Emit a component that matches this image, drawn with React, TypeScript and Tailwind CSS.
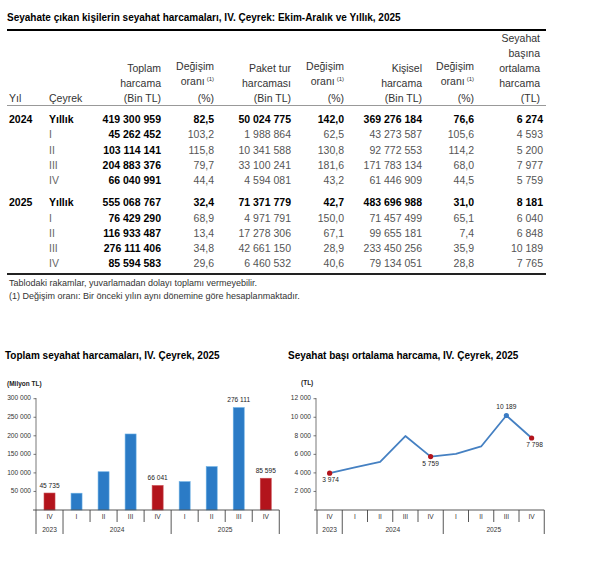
import React from "react";

type Row = {
  year?: string;
  q: string;
  vals: string[];
  bold?: boolean;
};

const rows2024: Row[] = [
  { year: "2024", q: "Yıllık", bold: true, vals: ["419 300 959", "82,5", "50 024 775", "142,0", "369 276 184", "76,6", "6 274"] },
  { q: "I", vals: ["45 262 452", "103,2", "1 988 864", "62,5", "43 273 587", "105,6", "4 593"] },
  { q: "II", vals: ["103 114 141", "115,8", "10 341 588", "130,8", "92 772 553", "114,2", "5 200"] },
  { q: "III", vals: ["204 883 376", "79,7", "33 100 241", "181,6", "171 783 134", "68,0", "7 977"] },
  { q: "IV", vals: ["66 040 991", "44,4", "4 594 081", "43,2", "61 446 909", "44,5", "5 759"] },
];

const rows2025: Row[] = [
  { year: "2025", q: "Yıllık", bold: true, vals: ["555 068 767", "32,4", "71 371 779", "42,7", "483 696 988", "31,0", "8 181"] },
  { q: "I", vals: ["76 429 290", "68,9", "4 971 791", "150,0", "71 457 499", "65,1", "6 040"] },
  { q: "II", vals: ["116 933 487", "13,4", "17 278 306", "67,1", "99 655 181", "7,4", "6 848"] },
  { q: "III", vals: ["276 111 406", "34,8", "42 661 150", "28,9", "233 450 256", "35,9", "10 189"] },
  { q: "IV", vals: ["85 594 583", "29,6", "6 460 532", "40,6", "79 134 051", "28,8", "7 765"] },
];

const gridCols = "grid grid-cols-[40px_53px_61px_53px_77px_53px_78px_52px_69px]";

const Sup = () => <span className="relative -top-[4px] ml-[2px] text-[6px]">(1)</span>;

const TableRow = ({ row }: { row: Row }) => (
  <div className={`${gridCols} h-[15.25px] items-center leading-[15px]`}>
    <div className="pl-[2px] font-bold text-black">{row.year}</div>
    <div className={row.bold ? "pl-[2px] font-bold text-black" : "pl-[2px] text-[#666]"}>{row.q}</div>
    {row.vals.map((v, i) => (
      <div
        key={i}
        className={row.bold || i === 0 ? "text-right font-bold text-black" : "text-right text-[#555]"}
      >
        {v}
      </div>
    ))}
  </div>
);

// chart helpers (page coordinates via viewBox offset)
const BASE = 509;
const H = 111.3;

const barData = [
  { q: "IV", v: 45735, red: true, label: "45 735" },
  { q: "I", v: 45262 },
  { q: "II", v: 103114 },
  { q: "III", v: 204883 },
  { q: "IV", v: 66041, red: true, label: "66 041" },
  { q: "I", v: 76429 },
  { q: "II", v: 116933 },
  { q: "III", v: 276111, label: "276 111" },
  { q: "IV", v: 85595, red: true, label: "85 595" },
];

const lineData = [
  { q: "IV", v: 3974, red: true, label: "3 974", below: true },
  { q: "I", v: 4593 },
  { q: "II", v: 5200 },
  { q: "III", v: 7977 },
  { q: "IV", v: 5759, red: true, label: "5 759", below: true },
  { q: "I", v: 6040 },
  { q: "II", v: 6848 },
  { q: "III", v: 10189, blue: true, label: "10 189" },
  { q: "IV", v: 7765, red: true, label: "7 798", below: true },
];

const XAxis = ({ x0, step }: { x0: number; step: number }) => {
  const longs = [0, 1, 5, 9];
  return (
    <g>
      <line x1={x0 - 3} y1={BASE} x2={x0 + step * 9} y2={BASE} stroke="#444" strokeWidth={0.9} />
      {Array.from({ length: 10 }).map((_, i) => (
        <line
          key={i}
          x1={x0 + step * i}
          y1={BASE}
          x2={x0 + step * i}
          y2={longs.includes(i) ? 533 : 521}
          stroke="#444"
          strokeWidth={0.9}
        />
      ))}
      <text x={x0 + step * 0.5} y={529} fontSize={6.6} textAnchor="middle" dominantBaseline="middle" fill="#333">2023</text>
      <text x={x0 + step * 3} y={529} fontSize={6.6} textAnchor="middle" dominantBaseline="middle" fill="#333">2024</text>
      <text x={x0 + step * 7} y={529} fontSize={6.6} textAnchor="middle" dominantBaseline="middle" fill="#333">2025</text>
    </g>
  );
};

const YAxis = ({ x, ticks, max }: { x: number; ticks: number[]; max: number }) => (
  <g>
    <line x1={x} y1={397} x2={x} y2={BASE} stroke="#555" strokeWidth={0.8} />
    {ticks.map((t) => {
      const y = BASE - (t / max) * H;
      return (
        <g key={t}>
          <line x1={x - 2.5} y1={y} x2={x} y2={y} stroke="#555" strokeWidth={0.8} />
          <text x={x - 5} y={y} fontSize={6.6} textAnchor="end" dominantBaseline="middle" fill="#333">
            {t.toLocaleString("fr-FR").replace(/\s/g, " ")}
          </text>
        </g>
      );
    })}
  </g>
);

const BarChart = () => {
  const x0 = 36;
  const step = 27.03;
  const max = 300000;
  return (
    <svg width={285} height={190} viewBox="0 370 285 190" className="block">
      <text x={7} y={383} fontSize={6.5} fontWeight="bold" dominantBaseline="middle" fill="#222">(Milyon TL)</text>
      <YAxis x={x0} ticks={[50000, 100000, 150000, 200000, 250000, 300000]} max={max} />
      {barData.map((b, i) => {
        const cx = x0 + step * (i + 0.5);
        const h = (b.v / max) * H;
        return (
          <g key={i}>
            <rect
              x={cx - 5.5}
              y={BASE - h}
              width={11}
              height={h}
              fill={b.red ? "#b3141c" : "#2b7bc6"}
              stroke={b.red ? "#c9494f" : "#68aee4"}
              strokeWidth={0.6}
            />
            <text x={cx} y={516} fontSize={6.6} textAnchor="middle" dominantBaseline="middle" fill="#333">{b.q}</text>
            {b.label && (
              <text x={cx} y={BASE - h - 7} fontSize={6.6} textAnchor="middle" dominantBaseline="middle" fill="#222">
                {b.label}
              </text>
            )}
          </g>
        );
      })}
      <XAxis x0={x0} step={step} />
    </svg>
  );
};

const LineChart = () => {
  const x0 = 317;
  const step = 25.25;
  const max = 12000;
  const pts = lineData.map((d, i) => ({ ...d, x: x0 + step * (i + 0.5), y: BASE - (d.v / max) * H }));
  return (
    <svg width={315} height={190} viewBox="285 370 315 190" className="block">
      <text x={301} y={382} fontSize={6.5} fontWeight="bold" dominantBaseline="middle" fill="#222">(TL)</text>
      <YAxis x={316} ticks={[2000, 4000, 6000, 8000, 10000, 12000]} max={max} />
      <polyline
        points={pts.map((p) => `${p.x},${p.y}`).join(" ")}
        fill="none"
        stroke="#4580c2"
        strokeWidth={1.8}
        strokeLinejoin="round"
      />
      {pts.map((p, i) => (
        <g key={i}>
          <text x={p.x} y={516} fontSize={6.6} textAnchor="middle" dominantBaseline="middle" fill="#333">{p.q}</text>
          {p.red && <circle cx={p.x} cy={p.y} r={2.6} fill="#b3141c" />}
          {p.blue && <circle cx={p.x} cy={p.y} r={2.6} fill="#3b7cc4" />}
          {p.label && (
            <text
              x={p.x + (i === 8 ? 3 : i === 0 ? 1 : 0)}
              y={p.below ? p.y + 7.5 : p.y - 8}
              fontSize={6.6}
              textAnchor="middle"
              dominantBaseline="middle"
              fill="#222"
            >
              {p.label}
            </text>
          )}
        </g>
      ))}
      <XAxis x0={x0} step={step} />
    </svg>
  );
};

export default function App() {
  return (
    <div className="w-[600px] h-[563px] overflow-hidden bg-white font-['Liberation_Sans',Arial,sans-serif] text-[#222]">
      <div className="ml-[7px] w-[539px]">
        <div className="pt-[11px] pb-[4px] leading-[14px] text-[10px] font-bold text-black border-b-2 border-black">
          Seyahate çıkan kişilerin seyahat harcamaları, IV. Çeyrek: Ekim-Aralık ve Yıllık, 2025
        </div>

        <div className={`${gridCols} h-[75px] items-end border-b border-[#999] text-[10.5px] leading-[15px] text-[#333]`}>
          <div className="pl-[2px]">Yıl</div>
          <div className="pl-[2px]">Çeyrek</div>
          <div className="text-right">Toplam<br />harcama<br />(Bin TL)</div>
          <div className="text-right">Değişim<br />oranı<Sup /><br />(%)</div>
          <div className="text-right">Paket tur<br />harcaması<br />(Bin TL)</div>
          <div className="text-right">Değişim<br />oranı<Sup /><br />(%)</div>
          <div className="text-right">Kişisel<br />harcama<br />(Bin TL)</div>
          <div className="text-right">Değişim<br />oranı<Sup /><br />(%)</div>
          <div className="text-right pr-[3px]">Seyahat<br />başına<br />ortalama<br />harcama<br />(TL)</div>
        </div>

        <div className="pt-[6px] pb-[1px] text-[10.5px] border-b-2 border-[#222]">
          {rows2024.map((r, i) => (
            <TableRow key={i} row={r} />
          ))}
          <div className="h-[7px]" />
          {rows2025.map((r, i) => (
            <TableRow key={i} row={r} />
          ))}
        </div>

        <div className="pt-[2px] pl-[2px] text-[9px] leading-[13px] text-[#333]">
          <p>Tablodaki rakamlar, yuvarlamadan dolayı toplamı vermeyebilir.</p>
          <p>(1) Değişim oranı: Bir önceki yılın aynı dönemine göre hesaplanmaktadır.</p>
        </div>
      </div>

      <div className="mt-[46px] flex">
        <div className="w-[285px] pl-[5px] text-[10px] leading-[14px] font-bold text-black">
          Toplam seyahat harcamaları, IV. Çeyrek, 2025
        </div>
        <div className="pl-[3px] text-[10px] leading-[14px] font-bold text-black">
          Seyahat başı ortalama harcama, IV. Çeyrek, 2025
        </div>
      </div>
      <div className="mt-[8px] flex">
        <BarChart />
        <LineChart />
      </div>
    </div>
  );
}
